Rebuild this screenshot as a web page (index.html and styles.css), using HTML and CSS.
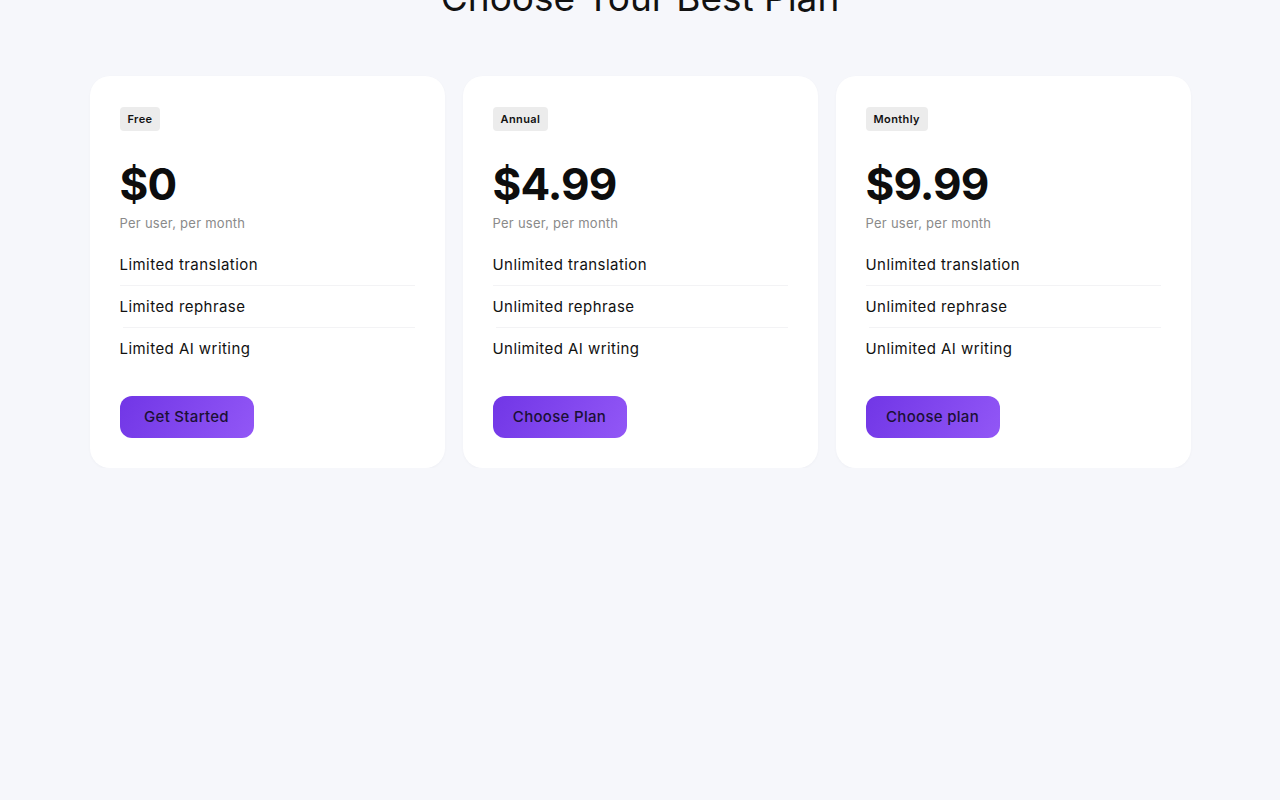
FILE: index.html
```html
<!DOCTYPE html>
<html>
<head>
  <meta charset="UTF-8">
  <title>Pricing</title>
  <link rel="stylesheet" href="styles.css">
</head>
<body>
  <section class="pricing">
    <h1 class="title">Choose Your Best Plan</h1>
    <div class="plans">
      <div class="plan">
        <span class="badge">Free</span>
        <h2 class="price">$0</h2>
        <p class="per">Per user, per month</p>
        <ul class="features">
          <li>Limited translation</li>
          <li class="indent">Limited rephrase</li>
          <li>Limited AI writing</li>
        </ul>
        <a href="#" class="btn">Get Started</a>
      </div>
      <div class="plan">
        <span class="badge">Annual</span>
        <h2 class="price">$4.99</h2>
        <p class="per">Per user, per month</p>
        <ul class="features">
          <li>Unlimited translation</li>
          <li class="indent">Unlimited rephrase</li>
          <li>Unlimited AI writing</li>
        </ul>
        <a href="#" class="btn">Choose Plan</a>
      </div>
      <div class="plan">
        <span class="badge">Monthly</span>
        <h2 class="price">$9.99</h2>
        <p class="per">Per user, per month</p>
        <ul class="features">
          <li>Unlimited translation</li>
          <li class="indent">Unlimited rephrase</li>
          <li>Unlimited AI writing</li>
        </ul>
        <a href="#" class="btn">Choose plan</a>
      </div>
    </div>
  </section>
</body>
</html>
```

FILE: styles.css
```css
* {
  padding: 0;
  margin: 0;
  box-sizing: border-box;
  font-family: Inter, "Noto Sans", sans-serif;
}

body {
  background-color: #f6f7fb;
  color: #111;
}

.pricing {
  width: 1101px;
  margin: 0 auto;
}

.title {
  margin-top: -24px;
  text-align: center;
  font-size: 37px;
  line-height: 44px;
  font-weight: 400;
  color: #111;
}

.plans {
  margin-top: 56px;
  display: grid;
  grid-template-columns: repeat(3, 1fr);
  gap: 18px;
}

.plan {
  background-color: #fff;
  border-radius: 20px;
  padding: 31px 30px 30px 30px;
  box-shadow: 0 1px 3px rgba(20, 20, 60, 0.03);
}

.badge {
  display: inline-block;
  height: 24px;
  line-height: 24px;
  padding: 0 8px;
  background-color: #ececec;
  border-radius: 4px;
  font-size: 11px;
  font-weight: 600;
  letter-spacing: 0.4px;
  color: #111;
}

.price {
  margin-top: 25px;
  font-size: 44px;
  line-height: 56px;
  font-weight: 700;
  letter-spacing: -0.02em;
  color: #0d0d0d;
}

.per {
  margin-top: 1px;
  font-size: 13px;
  line-height: 20px;
  color: #8a8a8a;
  letter-spacing: 0.02em;
}

.features {
  list-style: none;
  margin-top: 11px;
}

.features li {
  height: 42px;
  line-height: 41px;
  font-size: 15px;
  font-weight: 400;
  letter-spacing: 0.45px;
  color: #111;
  border-bottom: 1px solid #f3f3f5;
}

.features li:last-child {
  border-bottom: none;
}

.features li.indent {
  border-image: linear-gradient(to right, transparent 4px, #f3f3f5 4px) 1;
}

.btn {
  display: inline-block;
  margin-top: 26px;
  width: 134px;
  height: 42px;
  line-height: 42px;
  text-align: center;
  border-radius: 12px;
  background: linear-gradient(120deg, #7136e6 0%, #9257f6 100%);
  color: #1b1035;
  text-decoration: none;
  font-size: 15px;
  font-weight: 500;
  letter-spacing: 0.3px;
}
```
